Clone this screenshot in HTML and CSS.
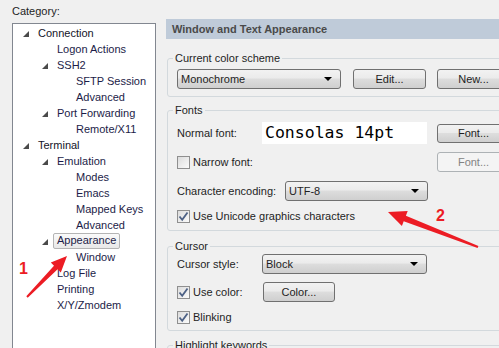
FILE: index.html
```html
<!DOCTYPE html>
<html lang="en">

<head>
    <meta charset="UTF-8">
    <title>Session Options</title>
    <link rel="stylesheet" href="styles.css">
</head>

<body>
    <!-- category tree -->
    <section class="side">
        <div class="side-title">Category:</div>
        <ul class="tree">
            <li class="lv0"><span class="tog"><svg width="6" height="6"><polygon points="6,0 6,6 0,6" /></svg></span>Connection</li>
            <li class="lv1">Logon Actions</li>
            <li class="lv1"><span class="tog"><svg width="6" height="6"><polygon points="6,0 6,6 0,6" /></svg></span>SSH2</li>
            <li class="lv2">SFTP Session</li>
            <li class="lv2">Advanced</li>
            <li class="lv1"><span class="tog"><svg width="6" height="6"><polygon points="6,0 6,6 0,6" /></svg></span>Port Forwarding</li>
            <li class="lv2">Remote/X11</li>
            <li class="lv0"><span class="tog"><svg width="6" height="6"><polygon points="6,0 6,6 0,6" /></svg></span>Terminal</li>
            <li class="lv1"><span class="tog"><svg width="6" height="6"><polygon points="6,0 6,6 0,6" /></svg></span>Emulation</li>
            <li class="lv2">Modes</li>
            <li class="lv2">Emacs</li>
            <li class="lv2">Mapped Keys</li>
            <li class="lv2">Advanced</li>
            <li class="lv1"><span class="tog"><svg width="6" height="6"><polygon points="6,0 6,6 0,6" /></svg></span><span class="selected">Appearance</span></li>
            <li class="lv2">Window</li>
            <li class="lv1">Log File</li>
            <li class="lv1">Printing</li>
            <li class="lv1">X/Y/Zmodem</li>
        </ul>
    </section>

    <!-- options panel -->
    <section class="main">
        <div class="header">Window and Text Appearance</div>

        <fieldset class="group g-scheme">
            <legend>Current color scheme</legend>
            <div class="row">
                <div class="select w-scheme">Monochrome<span class="caret"></span></div>
                <button class="btn">Edit...</button>
                <button class="btn">New...</button>
            </div>
        </fieldset>

        <fieldset class="group g-fonts">
            <legend>Fonts</legend>
            <div class="row r-normal">
                <span class="label">Normal font:</span>
                <div class="font-preview">Consolas 14pt</div>
                <button class="btn">Font...</button>
            </div>
            <div class="row r-narrow">
                <label class="chk-label w-narrow"><span class="check"></span>Narrow font:</label>
                <button class="btn" disabled>Font...</button>
            </div>
            <div class="row r-enc">
                <span class="label w-enc">Character encoding:</span>
                <div class="select w-encsel">UTF-8<span class="caret"></span></div>
            </div>
            <div class="row r-uni">
                <label class="chk-label"><span class="check on"><svg width="11" height="11" viewBox="0 0 11 11"><path d="M1.5 5.5 L4.2 8.8 L9.5 1.5" /></svg></span>Use Unicode graphics characters</label>
            </div>
        </fieldset>

        <fieldset class="group g-cursor">
            <legend>Cursor</legend>
            <div class="row r-style">
                <span class="label">Cursor style:</span>
                <div class="select w-style">Block<span class="caret"></span></div>
            </div>
            <div class="row r-color">
                <label class="chk-label w-color"><span class="check on"><svg width="11" height="11" viewBox="0 0 11 11"><path d="M1.5 5.5 L4.2 8.8 L9.5 1.5" /></svg></span>Use color:</label>
                <button class="btn w-colorbtn">Color...</button>
            </div>
            <div class="row r-blink">
                <label class="chk-label"><span class="check on"><svg width="11" height="11" viewBox="0 0 11 11"><path d="M1.5 5.5 L4.2 8.8 L9.5 1.5" /></svg></span>Blinking</label>
            </div>
        </fieldset>

        <fieldset class="group g-highlight">
            <legend>Highlight keywords</legend>
        </fieldset>
    </section>

    <!-- red annotations drawn over the dialog -->
    <svg class="marks" width="499" height="348">
        <polygon points="67,256 60.8,272.4 57.6,269.2 27.7,297.7 26.3,296.3 54,265.8 50.8,262.6" />
        <polygon points="388,212 407.7,211 405.9,215.7 478.4,246.1 477.6,247.9 403.7,221.3 401.9,226" />
    </svg>
    <div class="num num-1">1</div>
    <div class="num num-2">2</div>
</body>

</html>
```

FILE: styles.css
```css
body,
html {
    padding: 0;
    margin: 0;
}

body {
    width: 499px;
    height: 348px;
    overflow: hidden;
    display: flex;
    position: relative;
    background: #f0f0f0;
    font-family: "Liberation Sans", Arial, sans-serif;
    font-size: 11px;
    color: #1e1e1e;
}

/* left side ------------------------------ */
.side {
    flex: none;
    width: 166px;
    height: 348px;
    padding-left: 12px;
    box-sizing: border-box;
    overflow: hidden;
}

.side-title {
    padding-top: 4px;
    line-height: 14px;
    height: 19px;
}

.tree {
    list-style: none;
    margin: 0;
    padding: 1px 0 0 0;
    width: 144px;
    height: 340px;
    box-sizing: border-box;
    border: 1px solid #828790;
    background: #fff;
}

.tree li {
    height: 16px;
    line-height: 16px;
    color: #1c1c48;
    white-space: nowrap;
}

.tree .lv0 {
    padding-left: 25px;
    color: #141428;
}

.tree .lv1 {
    padding-left: 44px;
}

.tree .lv2 {
    padding-left: 63px;
}

.tog {
    display: inline-block;
    width: 14px;
    margin-left: -14px;
    vertical-align: top;
}

.tog svg {
    display: block;
    margin: 6px 0 0 -1px;
    fill: #4a4a4a;
}

.selected {
    display: inline-block;
    height: 14px;
    line-height: 13px;
    padding: 0 3px;
    margin-left: -4px;
    border: 1px solid #b4b4b4;
    border-radius: 2px;
    background: linear-gradient(#fafafa, #e8e8e8);
    vertical-align: top;
}

/* right side ------------------------------ */
.main {
    flex: none;
    width: 352px;
    height: 348px;
    padding-top: 19px;
    box-sizing: border-box;
    overflow: hidden;
}

.header {
    height: 20px;
    line-height: 20px;
    padding-left: 6px;
    background: #bfcbd9;
    color: #4a4a4a;
    font-weight: bold;
}

.group {
    margin: 0 0 0 1px;
    padding: 0 9px 7px 9px;
    border: 1px solid #d3d9dd;
    border-radius: 3px;
    min-width: 0;
}

.group legend {
    padding: 0 2px;
    margin-left: -4px;
    line-height: 14px;
}

.g-scheme {
    margin-top: 12px;
    padding-top: 4px;
}

.g-fonts {
    margin-top: 6px;
    padding-top: 5px;
}

.g-cursor {
    margin-top: 8px;
    padding-top: 1px;
    padding-bottom: 5px;
}

.g-highlight {
    margin-top: 7px;
    padding-bottom: 0;
    height: 10px;
}

.row {
    display: flex;
    align-items: center;
}

.label {
    width: 85px;
    flex: none;
}

.w-enc {
    width: 108px;
}

.select {
    position: relative;
    height: 20px;
    line-height: 18px;
    box-sizing: border-box;
    padding-left: 3px;
    border: 1px solid #707070;
    border-radius: 3px;
    background: linear-gradient(#f2f2f2, #ebebeb 45%, #dddddd 50%, #cfcfcf);
    flex: none;
}

.caret {
    position: absolute;
    right: 8px;
    top: 7px;
    border-left: 4px solid transparent;
    border-right: 4px solid transparent;
    border-top: 4px solid #000;
}

.w-scheme {
    width: 164px;
    margin-right: 12px;
}

.w-encsel {
    width: 143px;
}

.w-style {
    width: 165px;
}

.btn {
    flex: none;
    width: 73px;
    height: 20px;
    margin: 0 11px 0 0;
    padding: 0;
    box-sizing: border-box;
    border: 1px solid #707070;
    border-radius: 3px;
    background: linear-gradient(#f2f2f2, #ebebeb 45%, #dddddd 50%, #cfcfcf);
    font-family: inherit;
    font-size: 11px;
    color: #1e1e1e;
}

.btn:disabled {
    border-color: #adb2b5;
    background: #f4f4f4;
    color: #838383;
}

.font-preview {
    flex: none;
    width: 165px;
    height: 22px;
    margin-right: 10px;
    padding-left: 3px;
    box-sizing: border-box;
    background: #fff;
    font-family: "DejaVu Sans Mono", "Liberation Mono", monospace;
    font-size: 16.5px;
    line-height: 22px;
    color: #000;
}

.r-normal .btn {
    height: 19px;
}

.r-narrow {
    margin-top: 8px;
}

.w-narrow {
    width: 250px;
    margin-right: 10px;
}

.r-enc {
    margin-top: 9px;
}

.r-uni {
    margin-top: 8px;
    height: 14px;
}

.r-color {
    margin-top: 8px;
}

.w-color {
    width: 86px;
}

.w-colorbtn {
    width: 72px;
}

.r-blink {
    margin-top: 7px;
    height: 16px;
}

.chk-label {
    display: flex;
    align-items: center;
    flex: none;
}

.check {
    width: 13px;
    height: 13px;
    margin-right: 3px;
    box-sizing: border-box;
    border: 1px solid #8f8f8f;
    background: linear-gradient(135deg, #dcdcdc, #fbfbfb);
    display: flex;
    align-items: center;
    justify-content: center;
}

.check svg {
    fill: none;
    stroke: #4d6185;
    stroke-width: 1.8;
}

/* annotations ------------------------------ */
.marks {
    position: absolute;
    left: 0;
    top: 0;
    fill: #ec1c24;
}

.num {
    position: absolute;
    color: #ec1c24;
    font-family: "Liberation Sans", Arial, sans-serif;
    font-weight: bold;
    font-size: 16px;
    line-height: 16px;
}

.num-1 {
    left: 19px;
    top: 261px;
}

.num-2 {
    left: 436px;
    top: 208px;
}
```
